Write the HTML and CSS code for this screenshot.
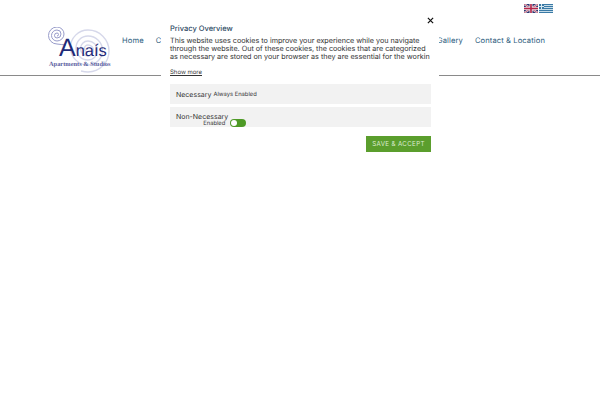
FILE: index.html
```html
<!DOCTYPE html>
<html lang="en">
<head>
    <meta charset="UTF-8">
    <meta name="viewport" content="width=device-width, initial-scale=1.0">
    <title>Anais Apartments &amp; Studios</title>
    <link rel="stylesheet" href="styles.css">
</head>
<body>
    <header class="site-header">
        <div class="lang-bar">
            <svg class="flag" viewBox="0 0 14 9" aria-label="English">
                <rect width="14" height="9" fill="#2b3570"/>
                <path d="M0 0L14 9M14 0L0 9" stroke="#e8dfe4" stroke-width="2"/>
                <path d="M0 0L14 9M14 0L0 9" stroke="#b5264a" stroke-width="0.7"/>
                <path d="M7 0V9M0 4.5H14" stroke="#e8dfe4" stroke-width="3"/>
                <path d="M7 0V9M0 4.5H14" stroke="#b5264a" stroke-width="1.6"/>
            </svg>
            <svg class="flag" viewBox="0 0 14 9" aria-label="Greek">
                <rect width="14" height="9" fill="#3a7aa6"/>
                <path d="M0 1.5H14M0 3.5H14M0 5.5H14M0 7.5H14" stroke="#c6dce8" stroke-width="1"/>
                <rect width="5" height="5" fill="#3a7aa6"/>
                <path d="M2.5 0V5M0 2.5H5" stroke="#d8e8f0" stroke-width="1"/>
            </svg>
        </div>
        <div class="header-main">
            <a class="logo" href="#">
                <svg class="logo-art" viewBox="0 0 65 46">
                    <g fill="none">
                        <path d="M18 18Q13 17.5 9 17A8.5 8.5 0 0 1 9 0A7 7 0 0 1 9 14A5.5 5.5 0 0 1 9 3A4 4 0 0 1 9 11A2.5 2.5 0 0 1 9 6A1.5 1.5 0 0 1 9 9" stroke="#989cca" stroke-width="1"/>
                        <path d="M33 44Q37 45 40 45A21 21 0 0 0 40 3A17.5 17.5 0 0 0 40 38A14.5 14.5 0 0 0 40 9A12 12 0 0 0 40 33A9.5 9.5 0 0 0 40 14A7.5 7.5 0 0 0 40 29A5.5 5.5 0 0 0 40 18A3.5 3.5 0 0 0 40 25" stroke="#d6d8ea" stroke-width="1.4"/>
                    </g>
                </svg>
                <span class="logo-name"><span class="logo-cap">A</span>naís</span>
                <span class="logo-sub">Apartments &amp; Studios</span>
            </a>
            <nav class="main-nav">
                <a href="#">Home</a>
                <a href="#">Comfort</a>
                <a class="nav-gallery" href="#">Gallery</a>
                <a href="#">Contact &amp; Location</a>
            </nav>
        </div>
    </header>

    <div class="cookie-modal">
        <button class="close-btn" aria-label="Close">
            <svg viewBox="0 0 8 8" width="7" height="7"><path d="M1 1L7 7M7 1L1 7" stroke="#111" stroke-width="1.4"/></svg>
        </button>
        <h4 class="modal-title">Privacy Overview</h4>
        <p class="modal-text">This website uses cookies to improve your experience while you navigate<br>through the website. Out of these cookies, the cookies that are categorized<br>as necessary are stored on your browser as they are essential for the workin</p>
        <a class="show-more" href="#">Show more</a>
        <div class="cookie-row">
            <span class="row-name">Necessary</span>
            <span class="row-note">Always Enabled</span>
        </div>
        <div class="cookie-row cookie-row-toggle">
            <div class="toggle-label">
                <span class="row-name">Non-Necessary</span>
                <span class="row-note">Enabled</span>
            </div>
            <span class="toggle"><span class="toggle-knob"></span></span>
        </div>
        <div class="modal-actions">
            <button class="save-btn">SAVE &amp; ACCEPT</button>
        </div>
    </div>
</body>
</html>
```

FILE: styles.css
```css
body {
    font-family: "Inter", "Open Sans", sans-serif;
    text-rendering: geometricPrecision;
    margin: 0;
    padding: 0;
    background-color: #fff;
    height: 400px;
    overflow: hidden;
}

.site-header {
    height: 75px;
    border-bottom: 1px solid #8a8a8a;
}

.lang-bar {
    display: flex;
    justify-content: flex-end;
    gap: 1px;
    height: 9px;
    padding: 4px 47px 0 0;
}

.flag {
    width: 14px;
    height: 9px;
    display: block;
}

.header-main {
    display: flex;
    align-items: flex-start;
    padding: 14px 55px 0 48px;
}

.logo {
    position: relative;
    display: block;
    flex: none;
    width: 65px;
    height: 46px;
    text-decoration: none;
}

.logo-art {
    position: absolute;
    top: 0;
    left: 0;
    width: 65px;
    height: 46px;
}

.logo-name {
    position: absolute;
    left: 11px;
    top: 15px;
    line-height: 18px;
    font-family: "Liberation Sans", sans-serif;
    font-size: 16.5px;
    color: #1f2a78;
}

.logo-cap {
    font-size: 25px;
    line-height: 0;
}

.logo-sub {
    position: absolute;
    left: 1px;
    top: 34px;
    line-height: 8px;
    font-family: "Liberation Serif", serif;
    font-size: 6.4px;
    font-weight: bold;
    white-space: nowrap;
    color: #5a60a0;
}

.main-nav {
    display: flex;
    flex: 1;
    gap: 12px;
    margin-left: 9px;
    padding-top: 9px;
    font-size: 7.6px;
    letter-spacing: 0.1px;
}

.main-nav a {
    color: #2f6080;
    text-decoration: none;
    white-space: nowrap;
}

.main-nav .nav-gallery {
    margin-left: auto;
}

.cookie-modal {
    position: absolute;
    top: 12px;
    left: 161px;
    width: 278px;
    height: 153px;
    box-sizing: border-box;
    padding: 11px 8px 0 9px;
    background-color: #fff;
    overflow: hidden;
}

.close-btn {
    position: absolute;
    top: 5px;
    right: 5px;
    padding: 0;
    border: none;
    background: none;
    line-height: 0;
}

.modal-title {
    margin: 0 0 3px 0;
    font-size: 7.5px;
    font-weight: 500;
    line-height: 11px;
    color: #2d4a63;
}

.modal-text {
    margin: 0;
    white-space: nowrap;
    font-size: 7.2px;
    line-height: 8.2px;
    color: #333;
}

.show-more {
    display: block;
    margin-top: 6px;
    font-size: 6px;
    line-height: 9px;
    color: #333;
}

.cookie-row {
    display: flex;
    align-items: center;
    box-sizing: border-box;
    height: 20px;
    margin-top: 7px;
    padding: 1px 0 0 6px;
    background-color: #f2f2f2;
    gap: 2px;
}

.cookie-row-toggle {
    margin-top: 3px;
    padding-top: 0;
    align-items: flex-end;
}

.row-name {
    font-size: 7px;
    color: #333;
}

.row-note {
    font-size: 5.8px;
    color: #333;
}

.toggle-label {
    display: flex;
    flex-direction: column;
    align-items: flex-end;
    line-height: 7px;
}

.toggle-label .row-note {
    margin-right: 3px;
}

.toggle {
    display: block;
    width: 16px;
    height: 8px;
    border-radius: 4px;
    background-color: #4e9a26;
    position: relative;
}

.toggle-knob {
    position: absolute;
    top: 1px;
    left: 1px;
    width: 6px;
    height: 6px;
    border-radius: 50%;
    background-color: #fff;
}

.modal-actions {
    display: flex;
    justify-content: flex-end;
    margin-top: 9px;
}

.save-btn {
    width: 65px;
    height: 16px;
    padding: 0;
    border: none;
    background-color: #5b9e2d;
    color: #dcebd0;
    font-family: inherit;
    font-size: 6.2px;
    letter-spacing: 0.35px;
}
```
